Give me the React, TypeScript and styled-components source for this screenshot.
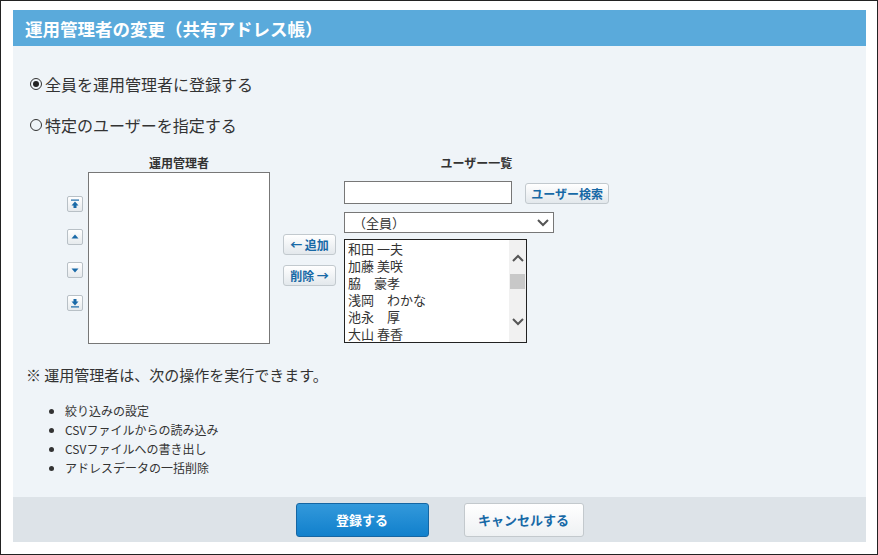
import React from 'react';
import styled, { createGlobalStyle } from 'styled-components';

const GlobalStyle = createGlobalStyle`
  html, body { margin: 0; padding: 0; background: #fff; }
  body { font-family: "Noto Sans CJK JP", "Noto Sans", sans-serif; color: #333; }
`;

const Frame = styled.div`
  width: 878px;
  height: 555px;
  box-sizing: border-box;
  border: 1px solid #222;
  padding: 9px 11px 0 12px;
`;

const Header = styled.div`
  height: 36px;
  background: #5aaadb;
  color: #fff;
  font-size: 17.5px;
  font-weight: bold;
  display: flex;
  align-items: center;
  padding-left: 12px;
`;

const Body = styled.div`
  background: #eff4f8;
  height: 451px;
  box-sizing: border-box;
  padding: 27px 0 0 13px;
`;

const RadioRow = styled.label`
  display: flex;
  align-items: center;
  font-size: 16px;
  height: 22px;
  margin: 0 0 19px 4px;
  gap: 3px;
`;

const Radio = styled.span<{ $on?: boolean }>`
  width: 12px;
  height: 12px;
  border: 1px solid #333;
  border-radius: 50%;
  box-sizing: border-box;
  display: inline-flex;
  align-items: center;
  justify-content: center;
  &::after {
    content: '';
    width: 6px;
    height: 6px;
    border-radius: 50%;
    background: ${({ $on }) => ($on ? '#222' : 'transparent')};
  }
`;

const Picker = styled.div`
  display: flex;
  margin: -1px 0 0 41px;
`;

const Column = styled.div<{ $w?: number }>`
  display: flex;
  flex-direction: column;
  ${({ $w }) => ($w ? `width: ${$w}px;` : '')}
`;

const ColTitle = styled.div`
  font-size: 12px;
  font-weight: bold;
  text-align: center;
  height: 18px;
  line-height: 18px;
`;

const Row = styled.div<{ $gap?: number }>`
  display: flex;
  align-items: flex-start;
  gap: ${({ $gap }) => $gap ?? 0}px;
`;

const ArrowStack = styled.div`
  display: flex;
  flex-direction: column;
  gap: 17px;
  padding-top: 42px;
  margin-right: 5px;
`;

const SmallBtn = styled.button`
  width: 16px;
  height: 16px;
  padding: 0;
  border: 1px solid #b8c0c6;
  border-radius: 2px;
  background: linear-gradient(#fff, #e6eaed);
  display: flex;
  align-items: center;
  justify-content: center;
  color: #1a6aa8;
`;

const Box = styled.div<{ $w: number; $h: number }>`
  width: ${({ $w }) => $w}px;
  height: ${({ $h }) => $h}px;
  box-sizing: border-box;
  border: 1px solid #777;
  background: #fff;
`;

const MoveStack = styled.div`
  display: flex;
  flex-direction: column;
  gap: 10px;
  padding: 80px 8px 0 13px;
`;

const Btn = styled.button<{ $w?: number }>`
  height: 21px;
  ${({ $w }) => ($w ? `width: ${$w}px;` : '')}
  padding: 0 5px;
  border: 1px solid #c2c9ce;
  border-radius: 3px;
  background: linear-gradient(#fff, #e3e8ec);
  color: #1769a6;
  font-family: inherit;
  font-size: 12px;
  font-weight: bold;
  white-space: nowrap;
`;

const Input = styled.div`
  width: 172px;
  height: 23px;
  box-sizing: border-box;
  border: 1px solid #777;
  background: #fff;
  margin-top: 4px;
`;

const Select = styled.div`
  width: 210px;
  height: 21px;
  box-sizing: border-box;
  border: 1px solid #777;
  background: #fff;
  margin-top: 8px;
  display: flex;
  align-items: center;
  justify-content: space-between;
  padding: 0 4px 0 8px;
  font-size: 13px;
`;

const List = styled.div`
  width: 183px;
  height: 104px;
  box-sizing: border-box;
  border: 1px solid #222;
  background: #fff;
  margin-top: 6px;
  display: flex;
`;

const Items = styled.div`
  flex: 1;
  padding: 0 0 0 3px;
  font-size: 13px;
  line-height: 17px;
  white-space: pre;
  overflow: hidden;
`;

const Scroll = styled.div`
  width: 17px;
  background: #f1f1f1;
  display: flex;
  flex-direction: column;
  align-items: center;
  justify-content: space-between;
  padding: 14px 0 16px;
  box-sizing: border-box;
`;

const Thumb = styled.div`
  width: 15px;
  height: 15px;
  background: #c8c8c8;
  margin-top: -18px;
`;

const Note = styled.div`
  font-size: 15px;
  margin: 20px 0 0 0;
`;

const Bullets = styled.ul`
  margin: 16px 0 0 0;
  padding-left: 39px;
  font-size: 12px;
  line-height: 19px;
`;

const Footer = styled.div`
  height: 45px;
  background: #dde3e8;
  display: flex;
  justify-content: center;
  align-items: center;
  gap: 35px;
`;

const Primary = styled.button`
  width: 133px;
  height: 34px;
  border: 1px solid #1566a3;
  border-radius: 3px;
  background: linear-gradient(#3399db, #1180cc);
  color: #fff;
  font-family: inherit;
  font-size: 13px;
  font-weight: bold;
`;

const Secondary = styled(Primary)`
  width: 120px;
  border-color: #c3c9cd;
  background: linear-gradient(#fff, #eef1f3);
  color: #1769a6;
`;

const Chev = ({ up }: { up?: boolean }) => (
  <svg width="12" height="8" viewBox="0 0 12 8">
    <path d={up ? 'M1 7 L6 2 L11 7' : 'M1 1 L6 6 L11 1'} fill="none" stroke="#555" strokeWidth="2" />
  </svg>
);

const Tri = ({ kind }: { kind: 'top' | 'up' | 'down' | 'bottom' }) => (
  <svg width="10" height="10" viewBox="0 0 10 10" fill="#1a6aa8">
    {kind === 'top' && <rect x="1" y="0.5" width="8" height="1.2" />}
    {(kind === 'top' || kind === 'up') && <path d="M5 2.5 L8.5 6.5 L1.5 6.5 Z" />}
    {kind === 'top' && <rect x="3.5" y="6" width="3" height="3" />}
    {(kind === 'down' || kind === 'bottom') && <path d="M5 7.5 L8.5 3.5 L1.5 3.5 Z" />}
    {kind === 'bottom' && <rect x="3.5" y="1" width="3" height="3" />}
    {kind === 'bottom' && <rect x="1" y="8.3" width="8" height="1.2" />}
  </svg>
);

const users = ['和田 一夫', '加藤 美咲', '脇　豪孝', '浅岡　わかな', '池永　厚', '大山 春香'];

export default function App() {
  return (
    <>
      <GlobalStyle />
      <Frame>
        <Header>運用管理者の変更（共有アドレス帳）</Header>
        <Body>
          <RadioRow><Radio $on />全員を運用管理者に登録する</RadioRow>
          <RadioRow><Radio />特定のユーザーを指定する</RadioRow>
          <Picker>
            <Row>
              <ArrowStack>
                <SmallBtn><Tri kind="top" /></SmallBtn>
                <SmallBtn><Tri kind="up" /></SmallBtn>
                <SmallBtn><Tri kind="down" /></SmallBtn>
                <SmallBtn><Tri kind="bottom" /></SmallBtn>
              </ArrowStack>
              <Column>
                <ColTitle>運用管理者</ColTitle>
                <Box $w={182} $h={172} />
              </Column>
            </Row>
            <MoveStack>
              <Btn $w={53}>← 追加</Btn>
              <Btn $w={53}>削除 →</Btn>
            </MoveStack>
            <Column $w={265}>
              <ColTitle>ユーザー一覧</ColTitle>
              <Row $gap={13} style={{ marginTop: 5, alignItems: 'flex-end' }}>
                <Input />
                <Btn>ユーザー検索</Btn>
              </Row>
              <Select>（全員）<Chev /></Select>
              <List>
                <Items>{users.join('\n')}</Items>
                <Scroll>
                  <Chev up />
                  <Thumb />
                  <Chev />
                </Scroll>
              </List>
            </Column>
          </Picker>
          <Note>※ 運用管理者は、次の操作を実行できます。</Note>
          <Bullets>
            <li>絞り込みの設定</li>
            <li>CSVファイルからの読み込み</li>
            <li>CSVファイルへの書き出し</li>
            <li>アドレスデータの一括削除</li>
          </Bullets>
        </Body>
        <Footer>
          <Primary>登録する</Primary>
          <Secondary>キャンセルする</Secondary>
        </Footer>
      </Frame>
    </>
  );
}
